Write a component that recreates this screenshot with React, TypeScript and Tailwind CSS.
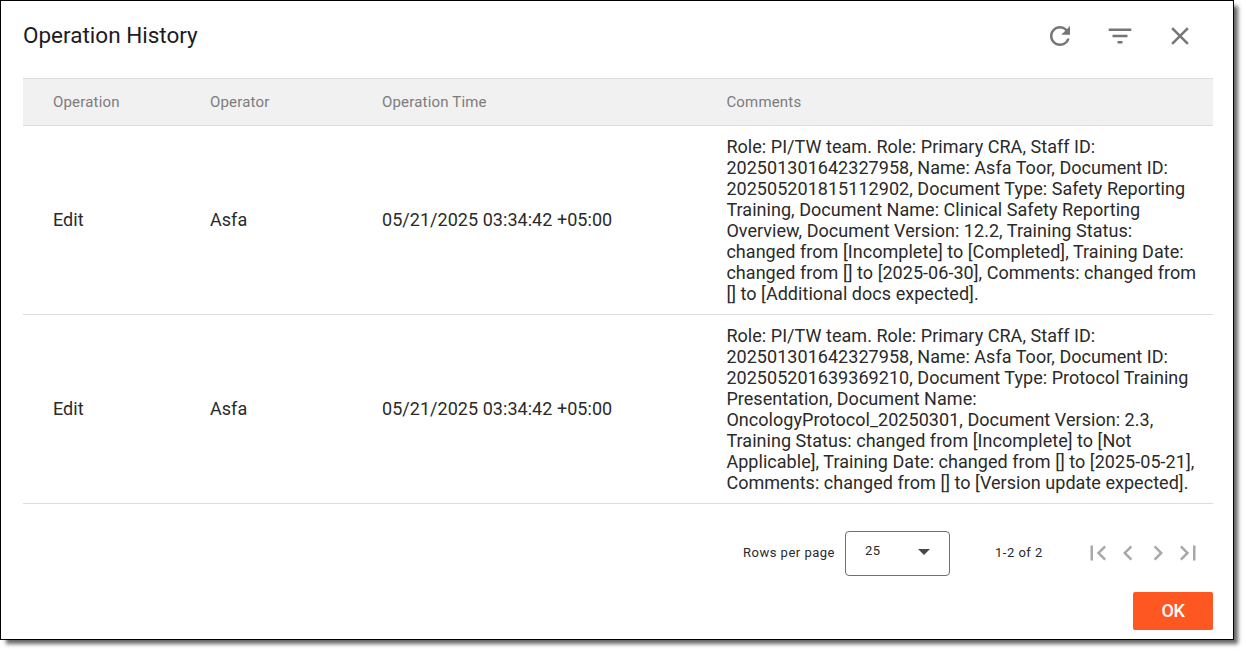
import { MdRefresh, MdFilterList, MdClose, MdFirstPage, MdChevronLeft, MdChevronRight, MdLastPage } from "react-icons/md";

const rows = [
  {
    operation: "Edit",
    operator: "Asfa",
    time: "05/21/2025 03:34:42 +05:00",
    comments:
      "Role: PI/TW team. Role: Primary CRA, Staff ID: 202501301642327958, Name: Asfa Toor, Document ID: 202505201815112902, Document Type: Safety Reporting Training, Document Name: Clinical Safety Reporting Overview, Document Version: 12.2, Training Status: changed from [Incomplete] to [Completed], Training Date: changed from [] to [2025-06-30], Comments: changed from [] to [Additional docs expected].",
  },
  {
    operation: "Edit",
    operator: "Asfa",
    time: "05/21/2025 03:34:42 +05:00",
    comments:
      "Role: PI/TW team. Role: Primary CRA, Staff ID: 202501301642327958, Name: Asfa Toor, Document ID: 202505201639369210, Document Type: Protocol Training Presentation, Document Name: OncologyProtocol_20250301, Document Version: 2.3, Training Status: changed from [Incomplete] to [Not Applicable], Training Date: changed from [] to [2025-05-21], Comments: changed from [] to [Version update expected].",
  },
];

const pageButtons = [
  { label: "First page", icon: MdFirstPage },
  { label: "Previous page", icon: MdChevronLeft },
  { label: "Next page", icon: MdChevronRight },
  { label: "Last page", icon: MdLastPage },
];

const columns = "grid grid-cols-[157px_172px_344.4px_1fr] pl-[30px]";

export default function App() {
  return (
    <div className="h-[652px] w-[1246px] overflow-hidden bg-white font-['Roboto',sans-serif]">
      <div className="flex h-[640px] w-[1234px] flex-col border border-black bg-white px-[22px] pr-5 shadow-[5px_5px_4px_-1px_rgba(0,0,0,0.6)]">
        {/* Title bar */}
        <header className="flex h-[77px] shrink-0 items-start justify-between">
          <h2 className="mt-[18px] text-[22.5px] leading-8 text-[#1c1b1f]">Operation History</h2>
          <div className="mt-5 mr-[17.6px] flex gap-[30px] text-[#757575]">
            <button aria-label="Refresh"><MdRefresh size={30} /></button>
            <button aria-label="Filter"><MdFilterList size={30} /></button>
            <button aria-label="Close"><MdClose size={30} /></button>
          </div>
        </header>

        {/* History table */}
        <div className={`${columns} h-12 items-center border-y border-[#dedede] bg-[#f1f1f1] text-[15px] tracking-[0.18px] text-[#7c7c7c]`}>
          <span>Operation</span>
          <span>Operator</span>
          <span>Operation Time</span>
          <span>Comments</span>
        </div>
        {rows.map((row, i) => (
          <div key={i} className={`${columns} h-[189px] items-center border-b border-[#dedede] text-lg leading-[21px] tracking-[0.04px] text-[#2a2a2a]`}>
            <span className="pb-0.5">{row.operation}</span>
            <span className="pb-0.5">{row.operator}</span>
            <span className="pb-0.5">{row.time}</span>
            <p className="pr-3">{row.comments}</p>
          </div>
        ))}

        {/* Paginator */}
        <div className="mt-[27px] flex h-[45px] shrink-0 items-center justify-end pr-2.5 text-[13px] tracking-[0.5px] text-[#2a2a2a]">
          <span className="mr-2.5 pb-0.5">Rows per page</span>
          <button className="flex h-[45px] w-[105px] items-center justify-between rounded border border-[#6f6d7a] pr-[19px] pb-[5px] pl-[19px]">
            <span>25</span>
            <svg width="12" height="6" viewBox="0 0 12 6" className="mt-0.5 fill-[#49454f]">
              <path d="M0 0h12L6 6z" />
            </svg>
          </button>
          <span className="ml-[45px] w-[88px] pb-0.5">1-2 of 2</span>
          <div className="flex pb-0.5 text-[#a8a8a8]">
            {pageButtons.map(({ label, icon: Icon }) => (
              <button key={label} aria-label={label}><Icon size={30} /></button>
            ))}
          </div>
        </div>

        <button className="mt-4 h-[38px] w-20 shrink-0 self-end rounded-xs bg-[#ff5722] text-lg font-medium tracking-[-0.4px] text-white">OK</button>
      </div>
    </div>
  );
}
